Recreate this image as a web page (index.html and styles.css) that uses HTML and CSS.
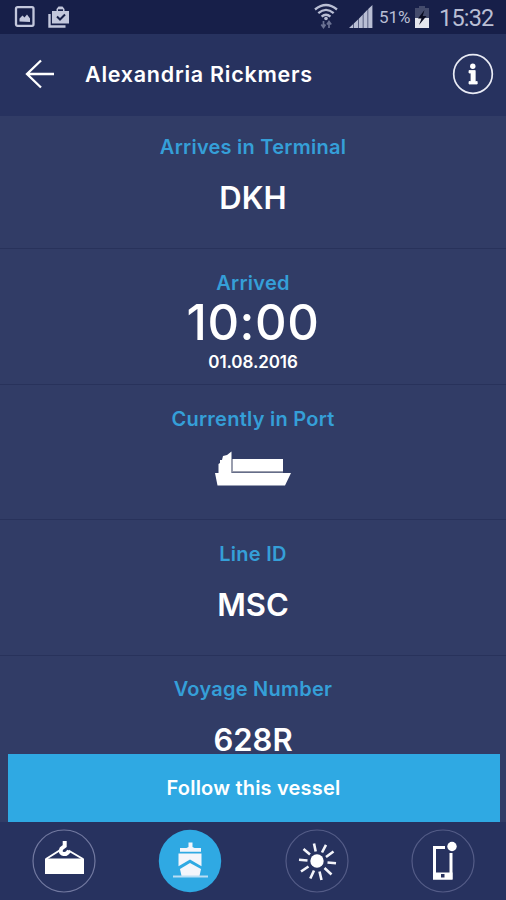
FILE: index.html
```html
<!DOCTYPE html>
<html lang="en">
  <head>
    <meta charset="UTF-8" />
    <meta name="viewport" content="width=device-width, initial-scale=1.0" />
    <title>Alexandria Rickmers</title>
    <link rel="stylesheet" href="styles.css">
  </head>

  <body>
    <div class="statusbar">
      <svg class="notifications" width="58" height="24" viewBox="0 0 58 24">
        <rect x="3" y="2.2" width="17.500" height="18.6" rx="1.5" fill="none" stroke="#c3c7dc" stroke-width="2.3" />
        <path d="M6.500 16.500v-3l3-3 2 2 2.500-3 3 4v3.500z" fill="#c3c7dc" />
        <path d="M36.500 9v12.500h16" fill="none" stroke="#c3c7dc" stroke-width="2.400" />
        <path d="M39 6h4.500V4l2-2.500h4L51.500 4v2H56v12.500H39z" fill="#c3c7dc" />
        <path d="M45 6V4.300h5V6z" fill="#182048" />
        <path d="M44 11.500l3 3 5-5" fill="none" stroke="#182048" stroke-width="2" />
      </svg>
      <div class="system">
        <svg class="wifi" width="24" height="26" viewBox="0 0 24 26">
          <g fill="none" stroke="#b9bed4" stroke-width="2.300">
            <path d="M1 6.500Q12-2.500 23 6.500" />
            <path d="M4.300 10.200Q12 3.500 19.700 10.200" />
            <path d="M7.600 13.700Q12 9.700 16.400 13.700" />
          </g>
          <circle cx="12" cy="15.500" r="1.800" fill="#b9bed4" />
          <path d="M9.500 18v6M7.300 21.500l2.200 3 2-3M15 25v-6M13 21.500l2-3 2.200 3" fill="none" stroke="#6b7293" stroke-width="1.700" />
        </svg>
        <svg class="signal" width="24" height="24" viewBox="0 0 24 24">
          <path d="M0 23l4.200-4v4zM4.800 18.500L9 14.500V23H4.800zM9.600 14l4.200-4.500V23H9.600zM14.400 9l4.200-4.500V23h-4.200zM19.200 4L23.400 0v23h-4.200z" fill="#b9bed4" />
        </svg>
        <span class="percent">51%</span>
        <svg class="battery" width="16" height="24" viewBox="0 0 16 24">
          <path d="M5 1h6v2h4v20H1V3h4z" fill="#444b6c" />
          <path d="M1 13h14v10H1z" fill="#e5e6ed" />
          <path d="M10.500 5L4 13.500h3.500L5 20l7.500-9H8.700z" fill="#080b20" />
        </svg>
        <span class="clock">15:32</span>
      </div>
    </div>

    <header>
      <svg class="back" width="30" height="30" viewBox="0 0 30 30">
        <path d="M29 15H2M16 1.500L2 15l14 13.500" fill="none" stroke="#fff" stroke-width="2.300" />
      </svg>
      <h1>Alexandria Rickmers</h1>
      <svg class="info" width="42" height="42" viewBox="0 0 42 42">
        <circle cx="21" cy="21" r="19.300" fill="none" stroke="#e9ebf5" stroke-width="1.700" />
        <circle cx="20.800" cy="13.200" r="2.700" fill="#fff" />
        <path d="M17 17.500h6.200v11h2V31H17v-2.500h2V20h-2z" fill="#fff" stroke="#fff" stroke-width="0.800" />
      </svg>
    </header>

    <main>
      <section class="row terminal">
        <h2>Arrives in Terminal</h2>
        <p class="value">DKH</p>
      </section>
      <section class="row arrived">
        <h2>Arrived</h2>
        <p class="time">10:00</p>
        <p class="date">01.08.2016</p>
      </section>
      <section class="row port">
        <h2>Currently in Port</h2>
        <svg class="vessel" width="78" height="36" viewBox="0 0 78 36">
          <path d="M1 22h3.500V13l1.500-1V9h2l1-4 4-1 4.500-3.500V22H77l-6 12.500H3.500z" fill="#fff" />
          <path d="M18.500 8H69v12.500H18.500z" fill="#fff" />
          <path d="M17.900 8v12.900H69" fill="none" stroke="#9a9dab" stroke-width="1.200" />
        </svg>
      </section>
      <section class="row line">
        <h2>Line ID</h2>
        <p class="value">MSC</p>
      </section>
      <section class="row voyage">
        <h2>Voyage Number</h2>
        <p class="value">628R</p>
      </section>
    </main>

    <footer>
      <button class="follow">Follow this vessel</button>
      <nav>
        <a class="tab">
          <svg width="64" height="64" viewBox="0 0 64 64">
            <circle cx="32" cy="32" r="31" fill="none" stroke="#7279a0" stroke-width="1.200" />
            <path d="M13 29.500h39v15.500H13z" fill="#fff" />
            <path d="M14 30l13.500-8.500M51 30l-14.500-8.500" fill="none" stroke="#fff" stroke-width="2" />
            <path d="M32.700 12v5l-3.200 2.500q-2 3.500 1 5.200 4 1.500 6.500-3" fill="none" stroke="#fff" stroke-width="4" />
          </svg>
        </a>
        <a class="tab">
          <svg width="64" height="64" viewBox="0 0 64 64">
            <circle cx="32" cy="32" r="31.200" fill="#2fa9e3" />
            <path d="M30.500 13.500h4V18l2 1h6.500v3.800H22V19h6.500l2-1z" fill="#f3f5fb" />
            <path d="M20.500 24.500h23v12.700L32 30.500l-11.500 6.700z" fill="#f3f5fb" />
            <path d="M22 40l10-6 11 6-1.500 7h-18z" fill="#f3f5fb" />
            <path d="M15 47.500h35" stroke="#b9def4" stroke-width="1.800" />
          </svg>
        </a>
        <a class="tab">
          <svg width="64" height="64" viewBox="0 0 64 64">
            <circle cx="32" cy="32" r="31" fill="none" stroke="#545c87" stroke-width="1.200" />
            <circle cx="32" cy="32" r="6.700" fill="#fff" />
            <path d="M30.700 22.500l-1.700-8M37 23.500l4-7.700M41 28l7.500-5.500M42.500 33.500l8.500.800M39.500 39l7 6.500M34.500 42.500l2 8.500M29 41.500l-3.700 8M23.500 37.500l-7.500 5M22.500 31.500l-8.500-.7M25 25.500L18.500 20" fill="none" stroke="#f3f4fa" stroke-width="2.600" />
          </svg>
        </a>
        <a class="tab">
          <svg width="64" height="64" viewBox="0 0 64 64">
            <circle cx="32" cy="32" r="31" fill="none" stroke="#545c87" stroke-width="1.200" />
            <path d="M34 18.500H23.500V49H40V24" fill="none" stroke="#fff" stroke-width="3" />
            <path d="M22 43.500h19.500v7H22z" fill="#fff" />
            <path d="M30 45h3.500v3.500H30z" fill="#28325f" />
            <circle cx="41" cy="17.500" r="4.700" fill="#fff" />
          </svg>
        </a>
      </nav>
    </footer>
  </body>
</html>
```
FILE: styles.css
```css
* {
  box-sizing: border-box;
}

body {
  margin: 0;
  height: 900px;
  display: flex;
  flex-direction: column;
  overflow: hidden;
  background-color: #313c66;
  color: #fff;
  font-family: "Inter", "Liberation Sans", sans-serif;
}

h1, h2, p {
  margin: 0;
  white-space: nowrap;
}

svg {
  display: block;
}

.statusbar {
  flex: none;
  height: 34px;
  display: flex;
  justify-content: space-between;
  background-color: #171f49;
  padding: 5px 12px 0 13px;
}

.system {
  display: flex;
  color: #b9bed4;
  font-family: "Roboto", sans-serif;
}

.wifi {
  margin: -2px 11px 0 0;
}

.percent {
  font-size: 17px;
  line-height: 25px;
  width: 35px;
  margin-left: 6px;
}

.battery {
  margin-right: 9px;
}

.clock {
  font-size: 23.5px;
  line-height: 26px;
  letter-spacing: -0.8px;
  width: 55px;
}

header {
  flex: none;
  height: 82px;
  display: flex;
  align-items: center;
  background-color: #27325f;
  padding: 0 12px 3px 25px;
}

h1 {
  margin-left: 30px;
  font-size: 21.5px;
  font-weight: 600;
  letter-spacing: 0.75px;
}

.info {
  margin-left: auto;
}

main {
  flex: 1;
  min-height: 0;
  overflow: hidden;
}

.row {
  display: flex;
  flex-direction: column;
  align-items: center;
  height: 136px;
  padding-top: 22px;
  border-bottom: 1px solid #28325b;
}

.terminal {
  height: 133px;
  padding-top: 19px;
}

.port {
  height: 135px;
}

.voyage {
  padding-top: 21px;
}

h2 {
  color: #359fd8;
  font-size: 20px;
  font-weight: 600;
  line-height: 24px;
  letter-spacing: 0.25px;
}

.value {
  margin-top: 24px;
  font-size: 31px;
  font-weight: 600;
  line-height: 30px;
}

.time {
  margin-top: 2px;
  font-size: 49px;
  font-weight: 500;
  line-height: 52px;
  letter-spacing: 0.6px;
}

.date {
  margin-top: 1px;
  font-size: 17px;
  font-weight: 600;
  line-height: 24px;
  letter-spacing: -0.1px;
}

.vessel {
  margin-top: 20px;
}

footer {
  flex: none;
  height: 146px;
  background: linear-gradient(#313c66 68px, #27325f 68px);
}

.follow {
  display: block;
  width: 492px;
  height: 68px;
  margin-left: 7.5px;
  border: none;
  padding: 0;
  background-color: #2fa9e3;
  color: #fff;
  font-family: inherit;
  font-size: 20px;
  font-weight: 600;
  letter-spacing: 0.2px;
}

nav {
  display: flex;
  justify-content: space-between;
  padding: 7px 31px 0 32px;
}
```
